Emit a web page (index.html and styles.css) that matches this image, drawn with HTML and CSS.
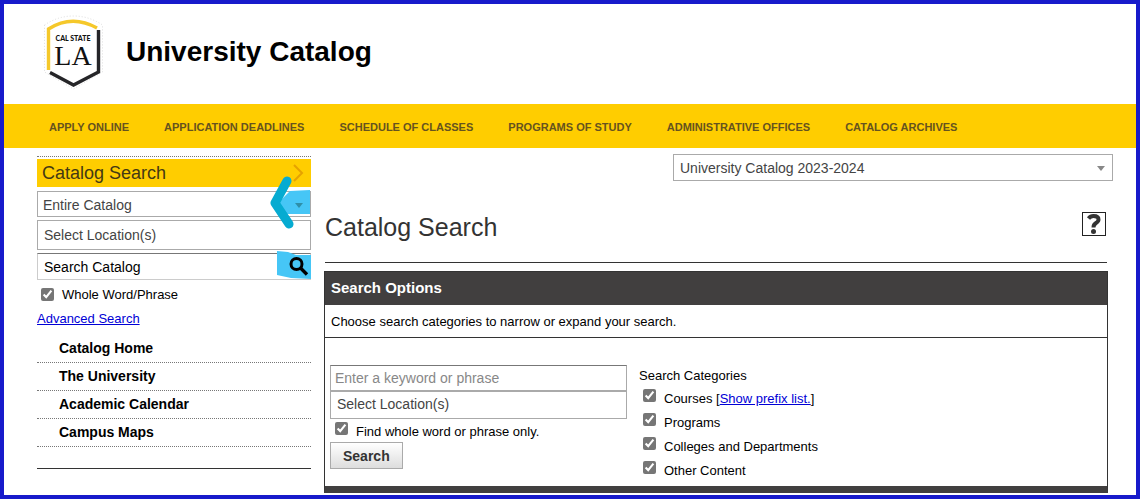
FILE: index.html
```html
<!DOCTYPE html>
<html lang="en">
<head>
<meta charset="utf-8">
<title>University Catalog</title>
<link rel="stylesheet" href="styles.css">
</head>
<body>
<div class="page">
  <header class="header">
    <svg class="logo" width="62" height="76" viewBox="0 0 62 76" role="img" aria-label="Cal State LA">
      <path d="M0.5 11 Q14 2 29.5 2 Q45 2 58.5 11 V58 L29.5 75 L0.5 58 Z" fill="#fff" stroke="#ddd" stroke-dasharray="1 2"/>
      <path d="M4.5 56 V15 Q28 0 53 14" fill="none" stroke="#f5c82a" stroke-width="3.4"/>
      <path d="M54.5 16 V58 L29.5 71 L6 58.5" fill="none" stroke="#252528" stroke-width="3.4"/>
      <text class="logo-small" x="29" y="27" text-anchor="middle">CAL STATE</text>
      <text class="logo-large" x="29" y="51" text-anchor="middle">LA</text>
    </svg>
    <div class="site-title">University Catalog</div>
  </header>
  <nav class="topnav" aria-label="Main">
    <a href="#">APPLY ONLINE</a>
    <a href="#">APPLICATION DEADLINES</a>
    <a href="#">SCHEDULE OF CLASSES</a>
    <a href="#">PROGRAMS OF STUDY</a>
    <a href="#">ADMINISTRATIVE OFFICES</a>
    <a href="#">CATALOG ARCHIVES</a>
  </nav>
  <div class="columns">
    <aside class="sidebar">
      <form class="side-search">
        <h2 class="side-title">Catalog Search
          <svg width="12" height="18" viewBox="0 0 12 18" aria-hidden="true"><path d="M2 1 L10 9 L2 17" fill="none" stroke="#e6a200" stroke-width="2"/></svg>
        </h2>
        <div class="select-wrap">
          <select class="field select" aria-label="Search scope"><option>Entire Catalog</option></select>
          <svg class="marker" width="42" height="56" viewBox="0 0 42 56" aria-hidden="true">
            <path d="M20 16 L40 15 V39 H16 L8 28 Z" fill="#46c6f6"/>
            <path d="M17 6 L5 28 L19 49" fill="none" stroke="#06abd1" stroke-width="9" stroke-linecap="round" stroke-linejoin="round"/>
          </svg>
          <svg class="arrow" width="8" height="5" viewBox="0 0 8 5" aria-hidden="true"><path d="M0 0H8L4 5Z" fill="#2f8fa8"/></svg>
        </div>
        <input class="field locations" type="text" placeholder="Select Location(s)" aria-label="Select locations">
        <div class="keyword-wrap">
          <input class="keyword" type="text" placeholder="Search Catalog" aria-label="Search Catalog">
          <button class="go" type="button" aria-label="Search">
            <svg width="34" height="29" viewBox="0 0 34 29" aria-hidden="true">
              <path d="M0 0 L11 1 L19 4 H34 V28 L14 27 L0 24 Z" fill="#46c6f6"/>
              <circle cx="19.5" cy="13" r="5.5" fill="none" stroke="#000" stroke-width="3"/>
              <path d="M23 16.5 L30 23.5" stroke="#000" stroke-width="3.4"/>
            </svg>
          </button>
        </div>
        <label class="whole"><input class="check" type="checkbox" checked><span>Whole Word/Phrase</span></label>
        <a class="advanced" href="#">Advanced Search</a>
      </form>
      <nav class="side-nav" aria-label="Catalog">
        <a href="#">Catalog Home</a>
        <a href="#">The University</a>
        <a href="#">Academic Calendar</a>
        <a href="#">Campus Maps</a>
      </nav>
    </aside>
    <main class="main">
      <div class="select-wrap edition">
        <select class="field select" aria-label="Catalog edition"><option>University Catalog 2023-2024</option></select>
        <svg class="arrow" width="8" height="5" viewBox="0 0 8 5" aria-hidden="true"><path d="M0 0H8L4 5Z" fill="#888"/></svg>
      </div>
      <div class="content">
        <div class="heading">
          <h1>Catalog Search</h1>
          <button class="help" type="button" aria-label="Help">
            <svg width="18" height="22" viewBox="0 0 18 22" aria-hidden="true">
              <path d="M3.5 5.5 Q5.5 3 8.5 3 Q13.5 3 13.5 6.5 Q13.5 8.5 11 10 Q8.5 11.5 8.5 14.5" fill="none" stroke="#333" stroke-width="4"/>
              <circle cx="8.5" cy="18.5" r="2.5" fill="#333"/>
            </svg>
          </button>
        </div>
        <form class="panel">
          <h2 class="panel-title">Search Options</h2>
          <p class="panel-intro">Choose search categories to narrow or expand your search.</p>
          <div class="panel-body">
            <div class="terms">
              <input class="field phrase" type="text" placeholder="Enter a keyword or phrase" aria-label="Keyword or phrase">
              <input class="field locations" type="text" placeholder="Select Location(s)" aria-label="Locations">
              <label class="option"><input class="check" type="checkbox" checked><span>Find whole word or phrase only.</span></label>
              <button class="search-button" type="button">Search</button>
            </div>
            <fieldset class="categories">
              <legend>Search Categories</legend>
              <div class="option"><input class="check" id="courses" type="checkbox" checked><span><label for="courses">Courses</label> [<a href="#">Show prefix list.</a>]</span></div>
              <label class="option"><input class="check" type="checkbox" checked><span>Programs</span></label>
              <label class="option"><input class="check" type="checkbox" checked><span>Colleges and Departments</span></label>
              <label class="option"><input class="check" type="checkbox" checked><span>Other Content</span></label>
            </fieldset>
          </div>
        </form>
      </div>
    </main>
  </div>
</div>
</body>
</html>
```
FILE: styles.css
```css
* { box-sizing: border-box; }

body {
  margin: 0;
  background: #fff;
  color: #000;
  font: 13px/16px "Liberation Sans", Arial, sans-serif;
}

.page {
  min-height: 100vh;
  border: 4px solid #171acb;
}

a { color: #0000d6; }
input, select, button { font-family: inherit; }

.header {
  display: flex;
  align-items: center;
  gap: 20px;
  height: 100px;
  padding: 0 40px 4px;
}
.logo-small { font: 900 7px Lato, sans-serif; fill: #111; }
.logo-large { font: 28px "Liberation Serif", serif; fill: #111; }
.site-title { font-size: 28px; line-height: 32px; font-weight: bold; }

.topnav {
  display: flex;
  align-items: center;
  gap: 35px;
  height: 44px;
  padding: 2px 45px 0;
  background: #ffcd00;
}
.topnav a {
  color: #66531f;
  font-size: 11px;
  font-weight: bold;
  text-decoration: none;
  white-space: nowrap;
}

.columns {
  display: grid;
  grid-template-columns: 274px minmax(0, 1fr);
  gap: 13px;
  padding: 6px 23px 2px 33px;
}

.sidebar { padding-top: 2px; }
.side-search {
  display: flex;
  flex-direction: column;
  border-top: 1px dotted #777;
  padding-top: 2px;
}
.side-title {
  display: flex;
  justify-content: space-between;
  align-items: center;
  height: 28px;
  margin: 0 0 4px;
  padding: 0 7px 0 5px;
  background: #ffcd00;
  color: #443914;
  font-size: 18px;
  font-weight: normal;
}

.field {
  display: block;
  width: 100%;
  border: 1px solid #aaa;
  border-radius: 0;
  background: #fff;
  color: #444;
  font-size: 14px;
}
.field::placeholder { color: #444; }
.select-wrap { position: relative; }
.select {
  height: 27px;
  padding: 0 20px 0 6px;
  appearance: none;
}
.sidebar .select { height: 26px; padding: 2px 20px 0 5px; }
.arrow { position: absolute; right: 8px; top: 12px; }
.marker { position: absolute; right: -1px; top: -16px; pointer-events: none; }

.locations { height: 30px; padding: 0 6px; }
.sidebar .locations { margin: 3px 0; }

.keyword-wrap {
  position: relative;
  display: flex;
  height: 27px;
}
.keyword {
  flex: 1;
  min-width: 0;
  padding: 0 40px 0 6px;
  border: 1px solid #ccc;
  border-top-color: #777;
  font-size: 14px;
}
.keyword::placeholder { color: #000; }
.go {
  position: absolute;
  right: 0;
  top: -2px;
  padding: 0;
  border: 0;
  background: none;
}
.go svg { display: block; }

.check {
  width: 13px;
  height: 13px;
  margin: 0;
  flex: none;
  accent-color: #767676;
}
.whole {
  display: flex;
  align-items: center;
  gap: 8px;
  margin-top: 6px;
  padding-left: 4px;
}
.whole span { padding-top: 1px; }
.advanced { align-self: flex-start; margin-top: 8px; }

.side-nav {
  display: flex;
  flex-direction: column;
  margin-top: 8px;
  padding-bottom: 21px;
  border-bottom: 1px solid #333;
}
.side-nav a {
  padding: 5px 22px 6px;
  border-bottom: 1px dotted #777;
  color: #000;
  font-size: 14px;
  font-weight: bold;
  line-height: 16px;
  text-decoration: none;
}

.edition { max-width: 440px; margin-left: auto; }
.content { padding-right: 5px; }
.heading {
  display: flex;
  justify-content: space-between;
  align-items: center;
  height: 82px;
  margin: 0 1px 8px;
  padding: 5px 1px 0 0;
  border-bottom: 1px solid #333;
}
h1 {
  margin: 6px 0 0;
  color: #333;
  font-size: 25px;
  line-height: 30px;
  font-weight: normal;
}
.help {
  display: grid;
  place-items: center;
  width: 24px;
  height: 24px;
  padding: 0;
  border: 1px solid #222;
  background: #fff;
}

.panel {
  border: 1px solid #333;
  border-bottom: 7px solid #413f3f;
}
.panel-title {
  margin: 0;
  padding: 8px 6px 9px;
  background: #413f3f;
  color: #fff;
  font: 900 15px/16px "Liberation Sans", Arial, sans-serif;
}
.panel-intro {
  margin: 0;
  padding: 9px 6px 7px;
  border-bottom: 1px solid #333;
}
.panel-body {
  display: grid;
  grid-template-columns: 297px minmax(0, 1fr);
  gap: 11px;
  padding: 27px 5px 4px;
}
.phrase { height: 26px; padding: 0 4px; border-top-color: #777; }
.phrase::placeholder { color: #888; }
.terms .locations { height: 28px; padding-bottom: 2px; }

.option {
  display: flex;
  gap: 8px;
  height: 24px;
  padding: 3px 5px 0;
}
.terms .option { height: 23px; }
.option span { padding-top: 2px; }
.search-button {
  height: 27px;
  padding: 0 12px;
  border: 1px solid #aaa;
  background: linear-gradient(#fff, #ddd);
  color: #333;
  font-size: 14px;
  font-weight: bold;
}
.categories {
  min-width: 0;
  margin: 0;
  padding: 0;
  border: 0;
}
.categories legend { padding: 3px 0 2px 1px; }
```
